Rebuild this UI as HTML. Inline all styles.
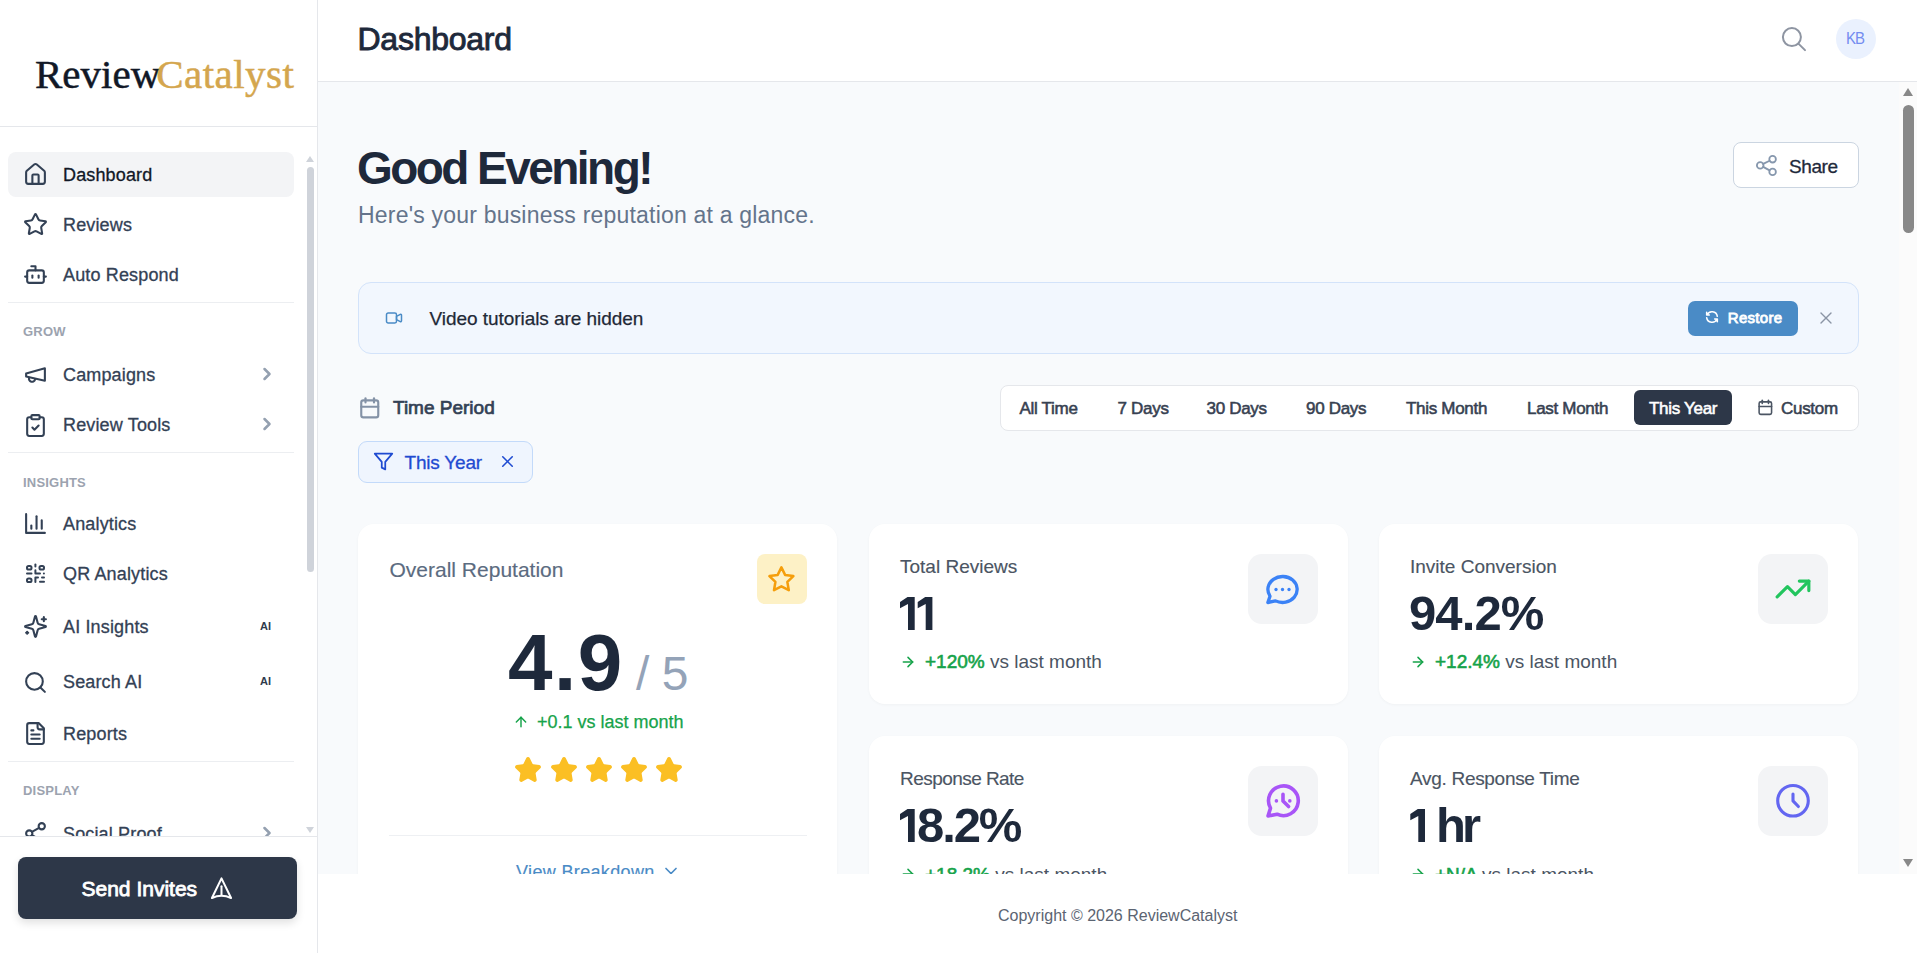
<!DOCTYPE html>
<html><head><meta charset="utf-8"><style>
*{box-sizing:border-box;margin:0;padding:0}
html,body{width:1917px;height:953px;overflow:hidden;background:#fff;font-family:"Liberation Sans",sans-serif}
.a{position:absolute;white-space:nowrap}
svg{position:absolute;overflow:visible}
.ni{stroke:#334155;fill:none;stroke-width:2;stroke-linecap:round;stroke-linejoin:round}
.card{position:absolute;background:#fff;border-radius:16px;box-shadow:0 1px 3px rgba(15,23,42,.035)}
</style></head><body>
<div style="position:absolute;left:0px;top:0px;width:317px;height:953px;background:#fff;"></div>
<div style="position:absolute;left:317px;top:0px;width:1px;height:953px;background:#e5e7eb;"></div>
<div class="a" style="left:35px;top:53.65px;font-size:41px;line-height:41px;color:#111827;font-family:'Liberation Serif',serif;-webkit-text-stroke-width:0.5px;">Review<span style="color:#d4a64e;margin-left:-4px;letter-spacing:0.45px">Catalyst</span></div>
<div style="position:absolute;left:0px;top:126px;width:317px;height:1px;background:#e5e7eb;"></div>
<div style="position:absolute;left:0;top:127px;width:317px;height:709px;overflow:hidden"><div style="position:absolute;left:0;top:-127px;width:317px;height:953px">
<div style="position:absolute;left:8px;top:152px;width:286px;height:45px;background:#f3f4f6;border-radius:8px"></div>
<svg class="ni" style="left:23px;top:162.1px" width="25" height="25" viewBox="0 0 24 24"><path d="M15 21v-8a1 1 0 0 0-1-1h-4a1 1 0 0 0-1 1v8"/><path d="M3 10a2 2 0 0 1 .709-1.528l7-5.999a2 2 0 0 1 2.582 0l7 5.999A2 2 0 0 1 21 10v9a2 2 0 0 1-2 2H5a2 2 0 0 1-2-2z"/></svg>
<div class="a" style="left:63px;top:165.70px;font-size:18px;line-height:18px;color:#111827;letter-spacing:0.15px;-webkit-text-stroke-width:0.3px;">Dashboard</div>
<svg class="ni" style="left:23px;top:212.1px" width="25" height="25" viewBox="0 0 24 24"><path d="M11.525 2.295a.53.53 0 0 1 .95 0l2.31 4.679a2.123 2.123 0 0 0 1.595 1.16l5.166.756a.53.53 0 0 1 .294.904l-3.736 3.638a2.123 2.123 0 0 0-.611 1.878l.882 5.14a.53.53 0 0 1-.771.56l-4.618-2.428a2.122 2.122 0 0 0-1.973 0L6.396 21.01a.53.53 0 0 1-.77-.56l.881-5.139a2.122 2.122 0 0 0-.611-1.879L2.16 9.795a.53.53 0 0 1 .294-.906l5.165-.755a2.122 2.122 0 0 0 1.597-1.16z"/></svg>
<div class="a" style="left:63px;top:215.70px;font-size:18px;line-height:18px;color:#334155;letter-spacing:0.15px;-webkit-text-stroke-width:0.3px;">Reviews</div>
<svg class="ni" style="left:23px;top:262.1px" width="25" height="25" viewBox="0 0 24 24"><path d="M12 8V4H8"/><rect width="16" height="12" x="4" y="8" rx="2"/><path d="M2 14h2"/><path d="M20 14h2"/><path d="M15 13v2"/><path d="M9 13v2"/></svg>
<div class="a" style="left:63px;top:265.70px;font-size:18px;line-height:18px;color:#334155;letter-spacing:0.15px;-webkit-text-stroke-width:0.3px;">Auto Respond</div>
<svg class="ni" style="left:23px;top:361.7px" width="25" height="25" viewBox="0 0 24 24"><path d="m3 11 18-5v12L3 14v-3z"/><path d="M11.6 16.8a3 3 0 1 1-5.8-1.6"/></svg>
<div class="a" style="left:63px;top:366.30px;font-size:18px;line-height:18px;color:#334155;letter-spacing:0.15px;-webkit-text-stroke-width:0.3px;">Campaigns</div>
<svg class="ni" style="left:23px;top:412.7px" width="25" height="25" viewBox="0 0 24 24"><rect width="8" height="4" x="8" y="2" rx="1" ry="1"/><path d="M16 4h2a2 2 0 0 1 2 2v14a2 2 0 0 1-2 2H6a2 2 0 0 1-2-2V6a2 2 0 0 1 2-2h2"/><path d="m9 14 2 2 4-4"/></svg>
<div class="a" style="left:63px;top:416.30px;font-size:18px;line-height:18px;color:#334155;letter-spacing:0.15px;-webkit-text-stroke-width:0.3px;">Review Tools</div>
<svg class="ni" style="left:23px;top:510.8px" width="25" height="25" viewBox="0 0 24 24"><path d="M3 3v18h18"/><path d="M18 17V9"/><path d="M13 17V5"/><path d="M8 17v-3"/></svg>
<div class="a" style="left:63px;top:515.40px;font-size:18px;line-height:18px;color:#334155;letter-spacing:0.15px;-webkit-text-stroke-width:0.3px;">Analytics</div>
<svg class="ni" style="left:23px;top:561px" width="24" height="24" viewBox="0 0 24 24" stroke-width="1.9"><rect x="4" y="5" width="4.5" height="3.5" rx="1.6"/><rect x="16.5" y="5" width="4.5" height="3.5" rx="1.6"/><rect x="4" y="17.4" width="4.5" height="3.6" rx="1.6"/><path d="M12.4 3.6v1.8"/><path d="M4 12.5h4.5"/><path d="M12.4 9.3v3.2h4.6"/><path d="M20.9 12.5h.01"/><path d="M12.4 21v-4.5h2.6"/><path d="M19 16.5h2"/><path d="M17 20.7h4"/></svg>
<div class="a" style="left:63px;top:565.10px;font-size:18px;line-height:18px;color:#334155;letter-spacing:0.15px;-webkit-text-stroke-width:0.3px;">QR Analytics</div>
<svg class="ni" style="left:23px;top:614.4px" width="25" height="25" viewBox="0 0 24 24"><path d="M9.937 15.5A2 2 0 0 0 8.5 14.063l-6.135-1.582a.5.5 0 0 1 0-.962L8.5 9.936A2 2 0 0 0 9.937 8.5l1.582-6.135a.5.5 0 0 1 .963 0L14.063 8.5A2 2 0 0 0 15.5 9.937l6.135 1.581a.5.5 0 0 1 0 .964L15.5 14.063a2 2 0 0 0-1.437 1.437l-1.582 6.135a.5.5 0 0 1-.963 0z"/><path d="M20 3v4"/><path d="M22 5h-4"/><path d="M4 17v2"/><path d="M5 18H3"/></svg>
<div class="a" style="left:63px;top:618.00px;font-size:18px;line-height:18px;color:#334155;letter-spacing:0.15px;-webkit-text-stroke-width:0.3px;">AI Insights</div>
<svg class="ni" style="left:23px;top:669.5px" width="25" height="25" viewBox="0 0 24 24"><circle cx="11" cy="11" r="8"/><path d="m21 21-4.3-4.3"/></svg>
<div class="a" style="left:63px;top:673.10px;font-size:18px;line-height:18px;color:#334155;letter-spacing:0.15px;-webkit-text-stroke-width:0.3px;">Search AI</div>
<svg class="ni" style="left:23px;top:721.4px" width="25" height="25" viewBox="0 0 24 24"><path d="M15 2H6a2 2 0 0 0-2 2v16a2 2 0 0 0 2 2h12a2 2 0 0 0 2-2V7Z"/><path d="M14 2v4a2 2 0 0 0 2 2h4"/><path d="M10 9H8"/><path d="M16 13H8"/><path d="M16 17H8"/></svg>
<div class="a" style="left:63px;top:725.00px;font-size:18px;line-height:18px;color:#334155;letter-spacing:0.15px;-webkit-text-stroke-width:0.3px;">Reports</div>
<svg class="ni" style="left:23px;top:821.1px" width="25" height="25" viewBox="0 0 24 24"><circle cx="18" cy="5" r="3"/><circle cx="6" cy="12" r="3"/><circle cx="18" cy="19" r="3"/><line x1="8.59" x2="15.42" y1="13.51" y2="17.49"/><line x1="15.41" x2="8.59" y1="6.51" y2="10.49"/></svg>
<div class="a" style="left:63px;top:824.70px;font-size:18px;line-height:18px;color:#334155;letter-spacing:0.15px;-webkit-text-stroke-width:0.3px;">Social Proof</div>
<svg style="left:256.8px;top:364.1px" width="20" height="20" viewBox="0 0 24 24" fill="none" stroke="#94a0b0" stroke-width="3" stroke-linecap="round" stroke-linejoin="round" ><path d="m9 18 6-6-6-6"/></svg>
<svg style="left:256.8px;top:414.1px" width="20" height="20" viewBox="0 0 24 24" fill="none" stroke="#94a0b0" stroke-width="3" stroke-linecap="round" stroke-linejoin="round" ><path d="m9 18 6-6-6-6"/></svg>
<svg style="left:256.8px;top:822.5px" width="20" height="20" viewBox="0 0 24 24" fill="none" stroke="#94a0b0" stroke-width="3" stroke-linecap="round" stroke-linejoin="round" ><path d="m9 18 6-6-6-6"/></svg>
<div class="a" style="left:260px;top:621.05px;font-size:11px;line-height:11px;font-weight:bold;color:#2f3b4c;">AI</div>
<div class="a" style="left:260px;top:676.15px;font-size:11px;line-height:11px;font-weight:bold;color:#2f3b4c;">AI</div>
<div class="a" style="left:23px;top:324.75px;font-size:13px;line-height:13px;font-weight:bold;color:#9ca3af;letter-spacing:0.2px;">GROW</div>
<div class="a" style="left:23px;top:475.65px;font-size:13px;line-height:13px;font-weight:bold;color:#9ca3af;letter-spacing:0.2px;">INSIGHTS</div>
<div class="a" style="left:23px;top:784.35px;font-size:13px;line-height:13px;font-weight:bold;color:#9ca3af;letter-spacing:0.2px;">DISPLAY</div>
<div style="position:absolute;left:8px;top:302px;width:286px;height:1px;background:#eceef1;"></div>
<div style="position:absolute;left:8px;top:452px;width:286px;height:1px;background:#eceef1;"></div>
<div style="position:absolute;left:8px;top:761px;width:286px;height:1px;background:#eceef1;"></div>
<div style="position:absolute;left:306px;top:156px;width:0;height:0;border-left:4.5px solid transparent;border-right:4.5px solid transparent;border-bottom:6px solid #cfd3da"></div>
<div style="position:absolute;left:307px;top:167px;width:7px;height:405px;background:#cfd3da;border-radius:4px"></div>
<div style="position:absolute;left:306px;top:827px;width:0;height:0;border-left:4.5px solid transparent;border-right:4.5px solid transparent;border-top:6px solid #cfd3da"></div>
</div></div>
<div style="position:absolute;left:0px;top:836px;width:317px;height:1px;background:#e5e7eb;"></div>
<div style="position:absolute;left:18px;top:857px;width:279px;height:62px;background:#2d3748;border-radius:8px;box-shadow:0 4px 8px rgba(0,0,0,.12)"></div>
<div class="a" style="left:81.5px;top:878.15px;font-size:21px;line-height:21px;color:#fff;-webkit-text-stroke-width:0.8px;">Send Invites</div>
<svg style="left:207.5px;top:875px" width="27" height="27" viewBox="0 0 24 24" fill="none" stroke="#fff" stroke-width="1.8" stroke-linecap="round" stroke-linejoin="round" ><path d="M12 3 L20.5 20.5 Q12 16.5 3.5 20.5 Z"/><path d="M12 10v7.5"/></svg>
<div style="position:absolute;left:318px;top:0px;width:1599px;height:81px;background:#fff;"></div>
<div style="position:absolute;left:318px;top:81px;width:1599px;height:1px;background:#e5e7eb;"></div>
<div class="a" style="left:357.5px;top:23.00px;font-size:32px;line-height:32px;color:#1e293b;letter-spacing:-0.25px;-webkit-text-stroke-width:0.9px;">Dashboard</div>
<svg style="left:0;top:0" width="1917" height="953" viewBox="0 0 1917 953" fill="none" stroke="#8e95a2" stroke-width="2" stroke-linecap="round" stroke-linejoin="round"><circle cx="1791.9" cy="37.1" r="9"/><path d="M1798.4 43.6 1805 50.1"/></svg>
<div style="position:absolute;left:1836px;top:19px;width:40px;height:40px;background:#eaf1fe;border-radius:50%"></div>
<div class="a" style="left:1846.3px;top:30.35px;font-size:17px;line-height:17px;color:#738cf0;letter-spacing:-1px;transform:scaleX(0.88);transform-origin:0 0;">KB</div>
<div style="position:absolute;left:318px;top:82px;width:1599px;height:792px;overflow:hidden"><div style="position:absolute;left:-318px;top:-82px;width:1917px;height:953px">
<div style="position:absolute;left:318px;top:82px;width:1599px;height:792px;background:#f8fafc;"></div>
<div class="a" style="left:357px;top:144.60px;font-size:46px;line-height:46px;font-weight:bold;color:#1e293b;letter-spacing:-2.55px;">Good Evening!</div>
<div class="a" style="left:358px;top:203.55px;font-size:23px;line-height:23px;color:#64748b;letter-spacing:0.2px;">Here's your business reputation at a glance.</div>
<div style="position:absolute;left:1733px;top:142px;width:126px;height:46px;background:#fff;border:1px solid #cbd5e1;border-radius:8px"></div>
<svg style="left:0;top:0" width="1917" height="953" viewBox="0 0 1917 953" fill="none" stroke="#8697ad" stroke-width="1.8" stroke-linecap="round" stroke-linejoin="round"><circle cx="1760.2" cy="165.4" r="3.3"/><circle cx="1772.6" cy="159.2" r="3.3"/><circle cx="1772.6" cy="171.9" r="3.3"/><path d="M1763.2 163.9 1769.6 160.7M1763.2 166.9 1769.6 170.4"/></svg>
<div class="a" style="left:1789px;top:156.65px;font-size:19px;line-height:19px;color:#1e293b;letter-spacing:-0.4px;-webkit-text-stroke-width:0.3px;">Share</div>
<div style="position:absolute;left:358px;top:282px;width:1501px;height:72px;background:#f2f7fe;border:1px solid #d3e3fa;border-radius:13px"></div>
<svg style="left:384.3px;top:307.5px" width="20" height="20" viewBox="0 0 24 24" fill="none" stroke="#4a8bc6" stroke-width="1.8" stroke-linecap="round" stroke-linejoin="round" ><path d="M15 10l4.553 -2.276a1 1 0 0 1 1.447 .894v6.764a1 1 0 0 1 -1.447 .894l-4.553 -2.276v-4z"/><rect x="3" y="6" width="12" height="12" rx="2"/></svg>
<div class="a" style="left:429.5px;top:309.35px;font-size:19px;line-height:19px;color:#1f2937;letter-spacing:-0.05px;-webkit-text-stroke-width:0.25px;">Video tutorials are hidden</div>
<div style="position:absolute;left:1688px;top:301px;width:110px;height:35px;background:#4a8bc6;border-radius:7px"></div>
<svg style="left:1703.6px;top:309px" width="16" height="16" viewBox="0 0 24 24" fill="none" stroke="#fff" stroke-width="2.3" stroke-linecap="round" stroke-linejoin="round" ><path d="M20 11a8.1 8.1 0 0 0 -15.5 -2m-.5 -4v4h4"/><path d="M4 13a8.1 8.1 0 0 0 15.5 2m.5 4v-4h-4"/></svg>
<div class="a" style="left:1727.8px;top:309.85px;font-size:15px;line-height:15px;color:#fff;letter-spacing:0.3px;-webkit-text-stroke-width:0.8px;">Restore</div>
<svg style="left:1816px;top:308px" width="20" height="20" viewBox="0 0 24 24" fill="none" stroke="#8b95a5" stroke-width="1.6" stroke-linecap="round" stroke-linejoin="round" ><path d="M18 6 6 18"/><path d="m6 6 12 12"/></svg>
<svg style="left:356.6px;top:394.5px" width="25.5" height="25.5" viewBox="0 0 24 24" fill="none" stroke="#8492a6" stroke-width="2" stroke-linecap="round" stroke-linejoin="round" ><path d="M4 7a2 2 0 0 1 2 -2h12a2 2 0 0 1 2 2v12a2 2 0 0 1 -2 2h-12a2 2 0 0 1 -2 -2v-12z"/><path d="M16 3v4"/><path d="M8 3v4"/><path d="M4 11h16"/></svg>
<div class="a" style="left:393px;top:398.15px;font-size:19px;line-height:19px;color:#334155;-webkit-text-stroke-width:0.7px;">Time Period</div>
<div style="position:absolute;left:1000px;top:385px;width:859px;height:46px;background:#fff;border:1px solid #e5e7eb;border-radius:8px"></div>
<div style="position:absolute;left:1634px;top:390px;width:98px;height:35px;background:#2d3748;border-radius:6px"></div>
<div class="a" style="left:1019.5px;top:399.65px;font-size:17px;line-height:17px;color:#374151;letter-spacing:-0.3px;-webkit-text-stroke-width:0.55px;">All Time</div>
<div class="a" style="left:1117.5px;top:399.65px;font-size:17px;line-height:17px;color:#374151;letter-spacing:-0.3px;-webkit-text-stroke-width:0.55px;">7 Days</div>
<div class="a" style="left:1206.5px;top:399.65px;font-size:17px;line-height:17px;color:#374151;letter-spacing:-0.3px;-webkit-text-stroke-width:0.55px;">30 Days</div>
<div class="a" style="left:1306px;top:399.65px;font-size:17px;line-height:17px;color:#374151;letter-spacing:-0.3px;-webkit-text-stroke-width:0.55px;">90 Days</div>
<div class="a" style="left:1406px;top:399.65px;font-size:17px;line-height:17px;color:#374151;letter-spacing:-0.3px;-webkit-text-stroke-width:0.55px;">This Month</div>
<div class="a" style="left:1527px;top:399.65px;font-size:17px;line-height:17px;color:#374151;letter-spacing:-0.3px;-webkit-text-stroke-width:0.55px;">Last Month</div>
<div class="a" style="left:1649px;top:399.65px;font-size:17px;line-height:17px;color:#fff;letter-spacing:-0.3px;-webkit-text-stroke-width:0.55px;">This Year</div>
<div class="a" style="left:1781px;top:399.65px;font-size:17px;line-height:17px;color:#374151;letter-spacing:-0.3px;-webkit-text-stroke-width:0.55px;">Custom</div>
<svg style="left:1755.6px;top:398.4px" width="18.7" height="18.7" viewBox="0 0 24 24" fill="none" stroke="#4b5563" stroke-width="2" stroke-linecap="round" stroke-linejoin="round" ><path d="M4 7a2 2 0 0 1 2 -2h12a2 2 0 0 1 2 2v12a2 2 0 0 1 -2 2h-12a2 2 0 0 1 -2 -2v-12z"/><path d="M16 3v4"/><path d="M8 3v4"/><path d="M4 11h16"/></svg>
<div style="position:absolute;left:358px;top:441px;width:175px;height:42px;background:#eff5fe;border:1px solid #c3dafa;border-radius:9px"></div>
<svg style="left:373px;top:451px" width="21" height="21" viewBox="0 0 24 24" fill="none" stroke="#1f4bd1" stroke-width="2" stroke-linecap="round" stroke-linejoin="round" ><polygon points="22 3 2 3 10 12.46 10 19 14 21 14 12.46 22 3"/></svg>
<div class="a" style="left:404.5px;top:453.35px;font-size:19px;line-height:19px;color:#1f4bd1;letter-spacing:-0.2px;-webkit-text-stroke-width:0.3px;">This Year</div>
<svg style="left:497.5px;top:452px" width="19" height="19" viewBox="0 0 24 24" fill="none" stroke="#1f4bd1" stroke-width="2" stroke-linecap="round" stroke-linejoin="round" ><path d="M18 6 6 18"/><path d="m6 6 12 12"/></svg>
<div class="card" style="left:358px;top:524px;width:479px;height:400px"></div>
<div class="card" style="left:869px;top:524px;width:479px;height:180px"></div>
<div class="card" style="left:1379px;top:524px;width:479px;height:180px"></div>
<div class="card" style="left:869px;top:736px;width:479px;height:200px"></div>
<div class="card" style="left:1379px;top:736px;width:479px;height:200px"></div>
<div class="a" style="left:389.5px;top:558.95px;font-size:21px;line-height:21px;color:#5b6b80;-webkit-text-stroke-width:0.15px;">Overall Reputation</div>
<div style="position:absolute;left:757px;top:554px;width:50px;height:50px;background:#fdf1c6;border-radius:8px"></div>
<svg style="left:767.2px;top:564.75px" width="28.8" height="28.8" viewBox="0 0 24 24" fill="none" stroke="#f59e0b" stroke-width="2.1" stroke-linecap="round" stroke-linejoin="round" ><path d="M12 17.75l-6.172 3.245l1.179 -6.873l-5 -4.867l6.9 -1l3.086 -6.253l3.086 6.253l6.9 1l-5 4.867l1.179 6.873z"/></svg>
<div class="a" style="left:508px;top:622.50px;font-size:80px;line-height:80px;font-weight:bold;color:#1e293b;letter-spacing:1.5px;">4.9</div>
<div class="a" style="left:636px;top:649.70px;font-size:48px;line-height:48px;color:#94a3b8;letter-spacing:-0.5px;">/ 5</div>
<svg style="left:513px;top:713.5px" width="16" height="16" viewBox="0 0 24 24" fill="none" stroke="#16a34a" stroke-width="2.2" stroke-linecap="round" stroke-linejoin="round" ><path d="m5 12 7-7 7 7"/><path d="M12 19V5"/></svg>
<div class="a" style="left:537px;top:712.80px;font-size:18px;line-height:18px;color:#16a34a;-webkit-text-stroke-width:0.25px;">+0.1 vs last month</div>
<svg style="left:514.3px;top:756.3px" width="28" height="28" viewBox="0 0 24 24" fill="none" stroke="#fbbf24" stroke-width="2.2" stroke-linecap="round" stroke-linejoin="round" ><path fill="#fbbf24" d="M11.525 2.295a.53.53 0 0 1 .95 0l2.31 4.679a2.123 2.123 0 0 0 1.595 1.16l5.166.756a.53.53 0 0 1 .294.904l-3.736 3.638a2.123 2.123 0 0 0-.611 1.878l.882 5.14a.53.53 0 0 1-.771.56l-4.618-2.428a2.122 2.122 0 0 0-1.973 0L6.396 21.01a.53.53 0 0 1-.77-.56l.881-5.139a2.122 2.122 0 0 0-.611-1.879L2.16 9.795a.53.53 0 0 1 .294-.906l5.165-.755a2.122 2.122 0 0 0 1.597-1.16z"/></svg>
<svg style="left:549.5px;top:756.3px" width="28" height="28" viewBox="0 0 24 24" fill="none" stroke="#fbbf24" stroke-width="2.2" stroke-linecap="round" stroke-linejoin="round" ><path fill="#fbbf24" d="M11.525 2.295a.53.53 0 0 1 .95 0l2.31 4.679a2.123 2.123 0 0 0 1.595 1.16l5.166.756a.53.53 0 0 1 .294.904l-3.736 3.638a2.123 2.123 0 0 0-.611 1.878l.882 5.14a.53.53 0 0 1-.771.56l-4.618-2.428a2.122 2.122 0 0 0-1.973 0L6.396 21.01a.53.53 0 0 1-.77-.56l.881-5.139a2.122 2.122 0 0 0-.611-1.879L2.16 9.795a.53.53 0 0 1 .294-.906l5.165-.755a2.122 2.122 0 0 0 1.597-1.16z"/></svg>
<svg style="left:584.6999999999999px;top:756.3px" width="28" height="28" viewBox="0 0 24 24" fill="none" stroke="#fbbf24" stroke-width="2.2" stroke-linecap="round" stroke-linejoin="round" ><path fill="#fbbf24" d="M11.525 2.295a.53.53 0 0 1 .95 0l2.31 4.679a2.123 2.123 0 0 0 1.595 1.16l5.166.756a.53.53 0 0 1 .294.904l-3.736 3.638a2.123 2.123 0 0 0-.611 1.878l.882 5.14a.53.53 0 0 1-.771.56l-4.618-2.428a2.122 2.122 0 0 0-1.973 0L6.396 21.01a.53.53 0 0 1-.77-.56l.881-5.139a2.122 2.122 0 0 0-.611-1.879L2.16 9.795a.53.53 0 0 1 .294-.906l5.165-.755a2.122 2.122 0 0 0 1.597-1.16z"/></svg>
<svg style="left:619.9px;top:756.3px" width="28" height="28" viewBox="0 0 24 24" fill="none" stroke="#fbbf24" stroke-width="2.2" stroke-linecap="round" stroke-linejoin="round" ><path fill="#fbbf24" d="M11.525 2.295a.53.53 0 0 1 .95 0l2.31 4.679a2.123 2.123 0 0 0 1.595 1.16l5.166.756a.53.53 0 0 1 .294.904l-3.736 3.638a2.123 2.123 0 0 0-.611 1.878l.882 5.14a.53.53 0 0 1-.771.56l-4.618-2.428a2.122 2.122 0 0 0-1.973 0L6.396 21.01a.53.53 0 0 1-.77-.56l.881-5.139a2.122 2.122 0 0 0-.611-1.879L2.16 9.795a.53.53 0 0 1 .294-.906l5.165-.755a2.122 2.122 0 0 0 1.597-1.16z"/></svg>
<svg style="left:655.0999999999999px;top:756.3px" width="28" height="28" viewBox="0 0 24 24" fill="none" stroke="#fbbf24" stroke-width="2.2" stroke-linecap="round" stroke-linejoin="round" ><path fill="#fbbf24" d="M11.525 2.295a.53.53 0 0 1 .95 0l2.31 4.679a2.123 2.123 0 0 0 1.595 1.16l5.166.756a.53.53 0 0 1 .294.904l-3.736 3.638a2.123 2.123 0 0 0-.611 1.878l.882 5.14a.53.53 0 0 1-.771.56l-4.618-2.428a2.122 2.122 0 0 0-1.973 0L6.396 21.01a.53.53 0 0 1-.77-.56l.881-5.139a2.122 2.122 0 0 0-.611-1.879L2.16 9.795a.53.53 0 0 1 .294-.906l5.165-.755a2.122 2.122 0 0 0 1.597-1.16z"/></svg>
<div style="position:absolute;left:389px;top:835px;width:418px;height:1px;background:#eef0f3;"></div>
<div class="a" style="left:516px;top:863.20px;font-size:18px;line-height:18px;color:#4a8bc6;letter-spacing:0.35px;-webkit-text-stroke-width:0.15px;">View Breakdown</div>
<svg style="left:661px;top:861px" width="20" height="20" viewBox="0 0 24 24" fill="none" stroke="#4a8bc6" stroke-width="2" stroke-linecap="round" stroke-linejoin="round" ><path d="m6 9 6 6 6-6"/></svg>
<div class="a" style="left:900px;top:557.15px;font-size:19px;line-height:19px;color:#4b5563;-webkit-text-stroke-width:0.15px;">Total Reviews</div>
<div class="a" style="left:897px;top:588.65px;font-size:49px;line-height:49px;font-weight:bold;color:#1e293b;letter-spacing:-9px;"></div>
<svg style="left:900px;top:653.5px" width="16" height="16" viewBox="0 0 24 24" fill="none" stroke="#16a34a" stroke-width="2.3" stroke-linecap="round" stroke-linejoin="round" ><path d="M5 12h14"/><path d="m12 5 7 7-7 7"/></svg>
<div class="a" style="left:925px;top:652.25px;font-size:19px;line-height:19px;color:#4b5563;"><span style="color:#16a34a;-webkit-text-stroke-width:0.6px">+120%</span> vs last month</div>
<div style="position:absolute;left:1248px;top:554px;width:70px;height:70px;background:#f3f4f6;border-radius:14px"></div>
<svg style="left:1263px;top:569.7px" width="39" height="39" viewBox="0 0 24 24" fill="none" stroke="#3b82f6" stroke-width="2.05" stroke-linecap="round" stroke-linejoin="round" ><path d="M3 20l1.3 -3.9c-2.324 -3.437 -1.426 -7.872 2.1 -10.374c3.526 -2.501 8.59 -2.296 11.845 .48c3.255 2.777 3.695 7.266 1.029 10.501c-2.666 3.235 -7.615 4.215 -11.574 2.293l-4.7 1"/><path d="M12 12v.01"/><path d="M8 12v.01"/><path d="M16 12v.01"/></svg>
<div class="a" style="left:1410px;top:557.15px;font-size:19px;line-height:19px;color:#4b5563;-webkit-text-stroke-width:0.15px;">Invite Conversion</div>
<div class="a" style="left:1409px;top:588.65px;font-size:49px;line-height:49px;font-weight:bold;color:#1e293b;letter-spacing:-0.9px;">94.2%</div>
<svg style="left:1410px;top:653.5px" width="16" height="16" viewBox="0 0 24 24" fill="none" stroke="#16a34a" stroke-width="2.3" stroke-linecap="round" stroke-linejoin="round" ><path d="M5 12h14"/><path d="m12 5 7 7-7 7"/></svg>
<div class="a" style="left:1435px;top:652.25px;font-size:19px;line-height:19px;color:#4b5563;"><span style="color:#16a34a;-webkit-text-stroke-width:0.6px">+12.4%</span> vs last month</div>
<div style="position:absolute;left:1758px;top:554px;width:70px;height:70px;background:#f3f4f6;border-radius:14px"></div>
<svg style="left:1774px;top:570px" width="38" height="38" viewBox="0 0 24 24" fill="none" stroke="#22c55e" stroke-width="2" stroke-linecap="round" stroke-linejoin="round" ><polyline points="22 7 13.5 15.5 8.5 10.5 2 17"/><polyline points="16 7 22 7 22 13"/></svg>
<div class="a" style="left:900px;top:769.15px;font-size:19px;line-height:19px;color:#4b5563;letter-spacing:-0.55px;-webkit-text-stroke-width:0.15px;">Response Rate</div>
<div class="a" style="left:917px;top:800.65px;font-size:49px;line-height:49px;font-weight:bold;color:#1e293b;letter-spacing:-2.1px;">8.2%</div>
<svg style="left:900px;top:866.3px" width="16" height="16" viewBox="0 0 24 24" fill="none" stroke="#16a34a" stroke-width="2.3" stroke-linecap="round" stroke-linejoin="round" ><path d="M5 12h14"/><path d="m12 5 7 7-7 7"/></svg>
<div class="a" style="left:925px;top:865.05px;font-size:19px;line-height:19px;color:#4b5563;"><span style="color:#16a34a;-webkit-text-stroke-width:0.6px">+18.2%</span> vs last month</div>
<div style="position:absolute;left:1248px;top:766px;width:70px;height:70px;background:#f3f4f6;border-radius:14px"></div>
<svg style="left:0;top:0" width="1917" height="953" viewBox="0 0 1917 953" fill="none" stroke="#a855f7" stroke-width="3.6" stroke-linecap="round" stroke-linejoin="round"><path d="M1270.5 808.1 A14.85 14.85 0 1 1 1277.1 814.2 L1268 816 Z"/><path d="M1283 794.3V801l5.6 5.6"/><path d="M1276.4 800.9h.01"/><path d="M1289.8 800.9h.01"/></svg>
<div class="a" style="left:1410px;top:769.15px;font-size:19px;line-height:19px;color:#4b5563;letter-spacing:-0.3px;-webkit-text-stroke-width:0.15px;">Avg. Response Time</div>
<div class="a" style="left:1436px;top:800.65px;font-size:49px;line-height:49px;font-weight:bold;color:#1e293b;letter-spacing:-4px;">hr</div>
<svg style="left:1410px;top:866.3px" width="16" height="16" viewBox="0 0 24 24" fill="none" stroke="#16a34a" stroke-width="2.3" stroke-linecap="round" stroke-linejoin="round" ><path d="M5 12h14"/><path d="m12 5 7 7-7 7"/></svg>
<div class="a" style="left:1435px;top:865.05px;font-size:19px;line-height:19px;color:#4b5563;"><span style="color:#16a34a;-webkit-text-stroke-width:0.6px">+N/A</span> vs last month</div>
<div style="position:absolute;left:1758px;top:766px;width:70px;height:70px;background:#f3f4f6;border-radius:14px"></div>
<svg style="left:0;top:0" width="1917" height="953" viewBox="0 0 1917 953" fill="none" stroke="#6366f1" stroke-width="3.1" stroke-linecap="round" stroke-linejoin="round"><circle cx="1793" cy="800.75" r="15.3"/><path d="M1793 794.1V800.9l5.4 5.6"/></svg>
<svg style="left:0;top:0" width="1917" height="953" viewBox="0 0 1917 953"><polygon fill="#1e293b" points="907.5,597 914.7,597 914.7,630 908,630 908,604 900,608.3 900,602"/><polygon fill="#1e293b" points="925.2,597 932.4000000000001,597 932.4000000000001,630 925.7,630 925.7,604 917.7,608.3 917.7,602"/><polygon fill="#1e293b" points="907.5,809 914.7,809 914.7,842 908,842 908,816 900,820.3 900,814"/><polygon fill="#1e293b" points="1417.8,809 1425.0,809 1425.0,842 1418.3,842 1418.3,816 1410.3,820.3 1410.3,814"/></svg>
<div style="position:absolute;left:1899px;top:82px;width:18px;height:792px;background:#fbfbfb;"></div>
<div style="position:absolute;left:1903px;top:88px;width:0;height:0;border-left:5.5px solid transparent;border-right:5.5px solid transparent;border-bottom:8px solid #888"></div>
<div style="position:absolute;left:1903px;top:105px;width:11px;height:128px;background:#888;border-radius:6px"></div>
<div style="position:absolute;left:1903px;top:859px;width:0;height:0;border-left:5.5px solid transparent;border-right:5.5px solid transparent;border-top:8px solid #888"></div>
</div></div>
<div style="position:absolute;left:318px;top:874px;width:1599px;height:79px;background:#fff;"></div>
<div class="a" style="left:998px;top:908.20px;font-size:16px;line-height:16px;color:#5b6472;">Copyright © 2026 ReviewCatalyst</div>
</body></html>
